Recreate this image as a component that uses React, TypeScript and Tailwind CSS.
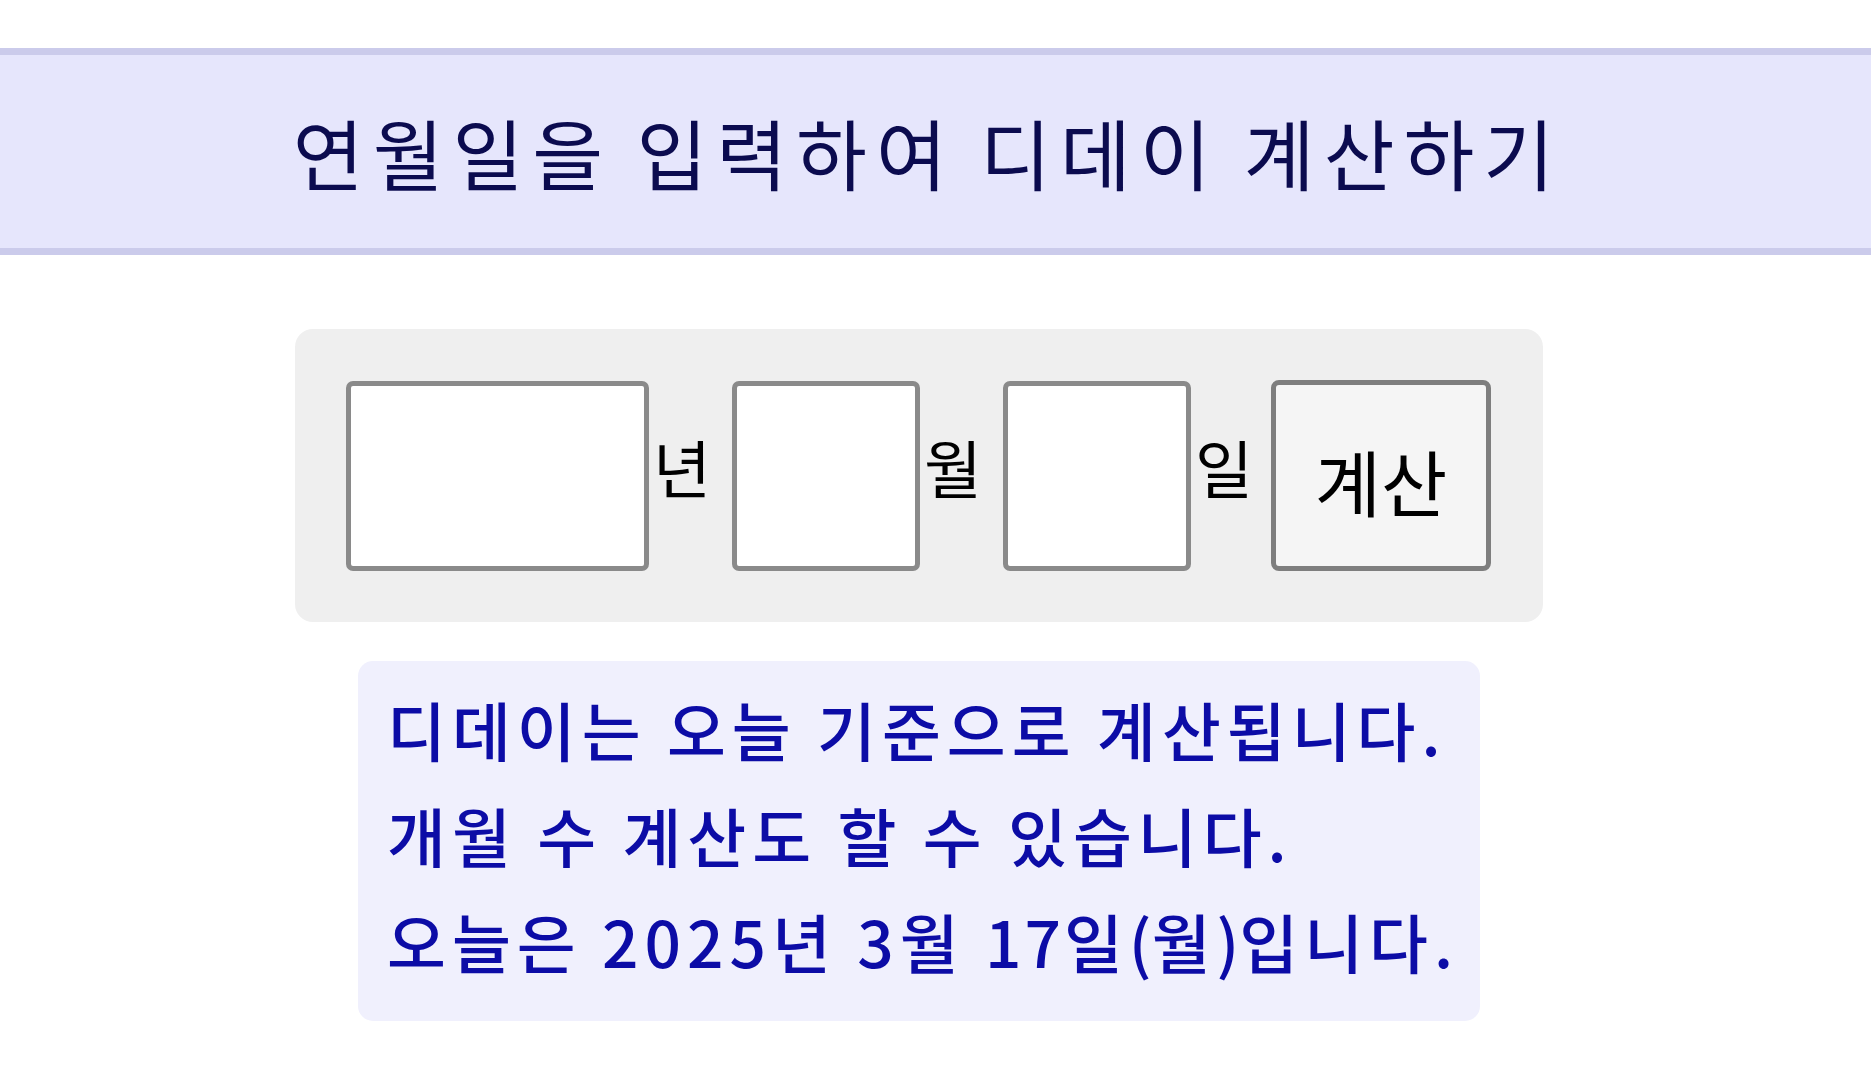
import React from "react";

const ko = { fontFamily: '"Noto Sans CJK KR", "Noto Sans", sans-serif' };

function DateField({ width }: { width: string }) {
  return (
    <input
      type="text"
      className={`${width} h-[190px] shrink-0 rounded-[7px] border-[5px] border-[#8a8a8a] bg-white outline-none`}
    />
  );
}

function Unit({ label, width }: { label: string; width: string }) {
  return (
    <span className={`${width} shrink-0 pl-[4px] mb-[20px] text-[63px] leading-none text-black`}>{label}</span>
  );
}

export default function App() {
  return (
    <div className="min-h-screen w-full bg-white pt-[48px]" style={ko}>
      <div className="w-full h-[207px] border-y-[7px] border-[#cbcbeb] bg-[#e6e6fc]">
        <div className="w-[1838px] h-full flex items-center justify-center pl-[18px]">
          <h1 className="text-[77px] leading-none font-normal text-[#0b0b4f] tracking-[9px] [word-spacing:-2px]">
            연월일을 입력하여 디데이 계산하기
          </h1>
        </div>
      </div>

      <div className="w-[1838px] flex flex-col items-center">
        <div className="mt-[74px] w-[1248px] rounded-[18px] bg-[#efefef] p-[51px] flex items-center">
          <DateField width="w-[303px]" />
          <Unit label="년" width="w-[83px]" />
          <DateField width="w-[188px]" />
          <Unit label="월" width="w-[83px]" />
          <DateField width="w-[188px]" />
          <Unit label="일" width="w-[80px]" />
          <button
            type="button"
            className="w-[220px] h-[191px] shrink-0 rounded-[8px] border-[5px] border-[#7e7e7e] bg-[#f5f5f5] pt-[8px] text-[72px] leading-none text-black"
          >
            계산
          </button>
        </div>

        <div className="mt-[39px] w-[1122px] rounded-[15px] bg-[#f0f0fd] pl-[29px] pt-[14px] pb-[28px] text-[64px] leading-[106px] font-medium text-[#0c0ca6] tracking-[6px] [word-spacing:0px]">
          <p>디데이는 오늘 기준으로 계산됩니다.</p>
          <p>개월 수 계산도 할 수 있습니다.</p>
          <p>
            오늘은 2025년 3월 <span className="tracking-[3px]">17</span>일
            <span className="tracking-[0px]">(</span>월<span className="tracking-[0px]">)</span>입니다.
          </p>
        </div>
      </div>
    </div>
  );
}
